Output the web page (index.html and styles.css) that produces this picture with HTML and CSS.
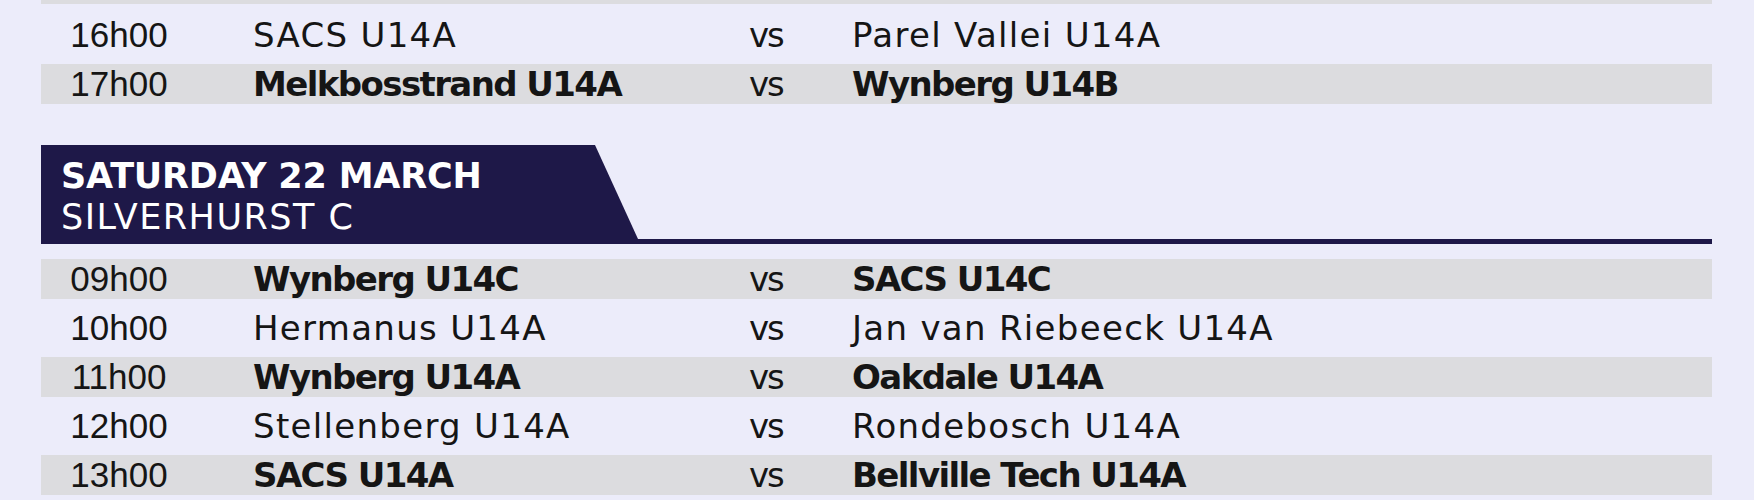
FILE: index.html
```html
<!DOCTYPE html>
<html lang="en">
<head>
<meta charset="utf-8">
<title>Fixtures</title>
<link rel="stylesheet" href="styles.css">
</head>
<body>
<main class="schedule">
  <section class="fixtures fixtures-top">
    <div class="row row-shaded row-cut"></div>
    <div class="row">
      <span class="time">16h00</span>
      <span class="team">SACS U14A</span>
      <span class="vs">vs</span>
      <span class="team">Parel Vallei U14A</span>
    </div>
    <div class="row row-shaded">
      <span class="time">17h00</span>
      <span class="team">Melkbosstrand U14A</span>
      <span class="vs">vs</span>
      <span class="team">Wynberg U14B</span>
    </div>
  </section>

  <header class="day">
    <div class="day-banner">
      <div class="day-date">SATURDAY 22 MARCH</div>
      <div class="day-venue">SILVERHURST C</div>
    </div>
  </header>

  <section class="fixtures fixtures-day">
    <div class="row row-shaded">
      <span class="time">09h00</span>
      <span class="team">Wynberg U14C</span>
      <span class="vs">vs</span>
      <span class="team">SACS U14C</span>
    </div>
    <div class="row">
      <span class="time">10h00</span>
      <span class="team">Hermanus U14A</span>
      <span class="vs">vs</span>
      <span class="team">Jan van Riebeeck U14A</span>
    </div>
    <div class="row row-shaded">
      <span class="time">11h00</span>
      <span class="team">Wynberg U14A</span>
      <span class="vs">vs</span>
      <span class="team">Oakdale U14A</span>
    </div>
    <div class="row">
      <span class="time">12h00</span>
      <span class="team">Stellenberg U14A</span>
      <span class="vs">vs</span>
      <span class="team">Rondebosch U14A</span>
    </div>
    <div class="row row-shaded">
      <span class="time">13h00</span>
      <span class="team">SACS U14A</span>
      <span class="vs">vs</span>
      <span class="team">Bellville Tech U14A</span>
    </div>
  </section>
</main>
</body>
</html>
```

FILE: styles.css
```css
html, body {
  margin: 0;
  padding: 0;
  background: #ececfa;
}

body {
  color: #151515;
  font-family: "DejaVu Sans", "Open Sans", sans-serif;
  overflow: hidden;
  height: 500px;
}

.schedule {
  width: 1671px;
  padding-left: 41px;
}

.fixtures {
  display: flex;
  flex-direction: column;
  gap: 9px;
}

.fixtures-day {
  margin-top: 15px;
}

.row {
  display: grid;
  grid-template-columns: 156px 56px 496px 103px 1fr;
  align-items: center;
  height: 40px;
  line-height: 40px;
  white-space: nowrap;
}

.row-cut {
  height: 4px;
  margin-bottom: 2px;
}

.row-shaded {
  background: #dcdcdf;
}

.time {
  grid-column: 1;
  text-align: center;
  font-family: "Liberation Sans", Arial, sans-serif;
  font-size: 35px;
}

.team {
  font-size: 34px;
  letter-spacing: 1.3px;
}

.time + .team {
  grid-column: 3;
}

.vs {
  grid-column: 4;
  font-size: 34px;
  letter-spacing: -2px;
}

.row-shaded .team {
  font-weight: bold;
  letter-spacing: -1.6px;
}

.day {
  margin-top: 41px;
  border-bottom: 5px solid #1e1848;
  display: flex;
}

.day-banner {
  width: 597px;
  height: 94px;
  box-sizing: border-box;
  padding: 11px 0 0 20px;
  background: #1e1848;
  color: #ffffff;
  clip-path: polygon(0 0, 554px 0, 100% 100%, 0 100%);
  font-size: 35px;
  line-height: 41px;
  white-space: nowrap;
}

.day-date {
  font-weight: bold;
  letter-spacing: -0.2px;
}

.day-venue {
  font-weight: normal;
  letter-spacing: 1.5px;
}
```
